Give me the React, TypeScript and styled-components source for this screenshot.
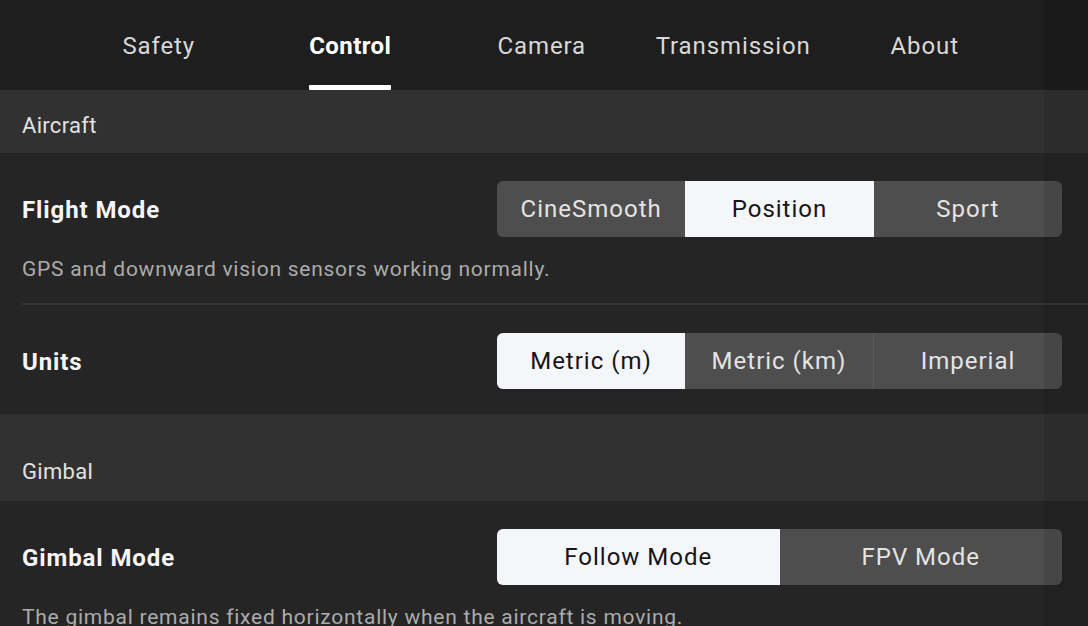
import React from "react";
import styled, { createGlobalStyle } from "styled-components";

const Global = createGlobalStyle`
  html, body { margin: 0; padding: 0; background: #242424; }
  body { font-family: Roboto, "Noto Sans", Arial, sans-serif; -webkit-font-smoothing: antialiased; }
  * { box-sizing: border-box; }
`;

const Page = styled.div`
  position: relative;
  width: 1088px;
  height: 626px;
  overflow: hidden;
  background: #252525;
  display: flex;
  flex-direction: column;
`;

const TabBar = styled.nav`
  height: 90px;
  flex-shrink: 0;
  background: #1e1e1e;
  display: flex;
  padding-left: 63px;
`;

const Tab = styled.div`
  width: 191.5px;
  height: 90px;
  display: flex;
  justify-content: center;
`;

const TabInner = styled.div<{ $active?: boolean }>`
  display: flex;
  flex-direction: column;
  padding-top: 32px;
  font-size: 24px;
  line-height: 28px;
  letter-spacing: ${(p) => (p.$active ? 0.4 : 0.9)}px;
  font-weight: ${(p) => (p.$active ? 700 : 400)};
  color: ${(p) => (p.$active ? "#ffffff" : "#d8d8d8")};
  white-space: nowrap;
`;

const Underline = styled.div<{ $active?: boolean }>`
  margin-top: auto;
  height: 5px;
  border-radius: 1px;
  background: ${(p) => (p.$active ? "#ffffff" : "transparent")};
`;

const SectionHeader = styled.div<{ $tall?: boolean }>`
  height: ${(p) => (p.$tall ? 87 : 63)}px;
  flex-shrink: 0;
  background: #313132;
  display: flex;
  align-items: ${(p) => (p.$tall ? "flex-end" : "center")};
  padding: ${(p) => (p.$tall ? "0 22px 16px" : "8px 22px 0")};
  font-size: 22px;
  line-height: 26px;
  letter-spacing: 0.3px;
  color: #e2e2e2;
`;

const Setting = styled.div<{ $divider?: boolean; $pb: number }>`
  margin-left: 22px;
  padding: 28px 26px ${(p) => p.$pb}px 0;
  border-bottom: ${(p) => (p.$divider ? "2px solid #353535" : "none")};
  flex-shrink: 0;
`;

const Row = styled.div`
  display: flex;
  align-items: center;
  justify-content: space-between;
  height: 56px;
`;

const Label = styled.div`
  font-size: 24px;
  font-weight: 700;
  letter-spacing: 0.9px;
  color: #f6f6f6;
  padding-top: 2px;
`;

const Description = styled.div`
  margin-top: 20px;
  font-size: 21px;
  line-height: 24px;
  letter-spacing: 0.75px;
  color: #acacac;
  white-space: nowrap;
`;

const Segmented = styled.div`
  width: 565px;
  height: 56px;
  display: flex;
  border-radius: 6px;
  overflow: hidden;
  background: #4e4e4e;
`;

const Segment = styled.div<{ $active?: boolean; $sep?: boolean }>`
  flex: 1;
  display: flex;
  align-items: center;
  justify-content: center;
  font-size: 24px;
  letter-spacing: 1px;
  color: ${(p) => (p.$active ? "#151515" : "#e4e4e4")};
  background: ${(p) => (p.$active ? "#f5f6fa" : "transparent")};
  border-left: ${(p) => (p.$sep ? "1px solid #5c5c5c" : "none")};
`;

const Shade = styled.div`
  position: absolute;
  top: 0;
  right: 0;
  width: 44px;
  height: 100%;
  background: rgba(0, 0, 0, 0.1);
  pointer-events: none;
`;

type Opt = { label: string; active?: boolean };

function SegmentedControl({ options }: { options: Opt[] }) {
  return (
    <Segmented>
      {options.map((o, i) => {
        const prev = options[i - 1];
        const sep = i > 0 && !o.active && !!prev && !prev.active;
        return (
          <Segment key={o.label} $active={o.active} $sep={sep}>
            {o.label}
          </Segment>
        );
      })}
    </Segmented>
  );
}

const tabs = [
  { label: "Safety" },
  { label: "Control", active: true },
  { label: "Camera" },
  { label: "Transmission" },
  { label: "About" },
];

export default function App() {
  return (
    <>
      <Global />
      <Page>
        <TabBar>
          {tabs.map((t) => (
            <Tab key={t.label}>
              <TabInner $active={t.active}>
                {t.label}
                <Underline $active={t.active} />
              </TabInner>
            </Tab>
          ))}
        </TabBar>

        <SectionHeader>Aircraft</SectionHeader>

        <Setting $divider $pb={22}>
          <Row>
            <Label>Flight Mode</Label>
            <SegmentedControl
              options={[
                { label: "CineSmooth" },
                { label: "Position", active: true },
                { label: "Sport" },
              ]}
            />
          </Row>
          <Description>GPS and downward vision sensors working normally.</Description>
        </Setting>

        <Setting $pb={25}>
          <Row>
            <Label>Units</Label>
            <SegmentedControl
              options={[
                { label: "Metric (m)", active: true },
                { label: "Metric (km)" },
                { label: "Imperial" },
              ]}
            />
          </Row>
        </Setting>

        <SectionHeader $tall>Gimbal</SectionHeader>

        <Setting $pb={20}>
          <Row>
            <Label>Gimbal Mode</Label>
            <SegmentedControl
              options={[{ label: "Follow Mode", active: true }, { label: "FPV Mode" }]}
            />
          </Row>
          <Description>The gimbal remains fixed horizontally when the aircraft is moving.</Description>
        </Setting>

        <Shade />
      </Page>
    </>
  );
}
